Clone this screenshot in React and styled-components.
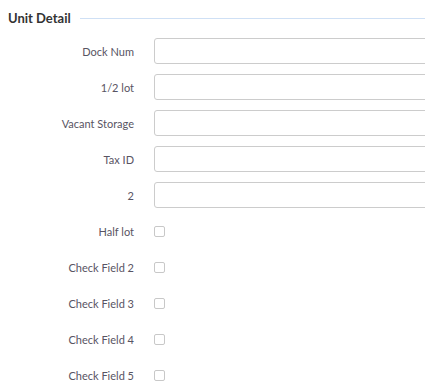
import React from 'react';
import styled, { createGlobalStyle } from "styled-components"

const GlobalStyle = createGlobalStyle`
    body {
        margin: 0;
        padding: 8px 0 8px 8px;
        font-family: Lato, "Open Sans", sans-serif;
        background: #fff;
        overflow: hidden;
    }
`

const textFields = ["Dock Num", "1/2 lot", "Vacant Storage", "Tax ID", "2"];
const checkFields = ["Half lot", "Check Field 2", "Check Field 3", "Check Field 4", "Check Field 5"];

const App = () => {
    return (
        <>
            <GlobalStyle/>
            <Section>
                <Header>
                    <Title>Unit Detail</Title>
                    <Rule/>
                </Header>
                <Rows>
                    {textFields.map(label =>
                        <Row key={label}>
                            <Label>{label}</Label>
                            <TextInput type="text"/>
                        </Row>
                    )}
                    {checkFields.map(label =>
                        <Row key={label}>
                            <Label>{label}</Label>
                            <Check type="checkbox"/>
                        </Row>
                    )}
                </Rows>
            </Section>
        </>
    )
}
export default App;

//inputs run past the right edge, so the section clips them
const Section = styled.div`
    overflow: hidden;
`

const Header = styled.div`
    display: flex;
    align-items: center;
    height: 20px;
    margin-bottom: 10px;
`

const Title = styled.h2`
    margin: 0;
    font-size: 13px;
    font-weight: 700;
    color: #333;
`

//the light blue line after the title
const Rule = styled.div`
    flex: 1;
    margin-left: 9px;
    border-top: 1px solid #cfe0f5;
`

const Rows = styled.div`
    display: flex;
    flex-direction: column;
    gap: 10px;
`

const Row = styled.div`
    display: grid;
    grid-template-columns: 126px 1fr;
    column-gap: 20px;
    align-items: center;
    height: 26px;
`

const Label = styled.label`
    text-align: right;
    font-size: 11px;
    color: #585463;
`

const TextInput = styled.input`
    box-sizing: border-box;
    height: 26px;
    width: 320px;
    border: 1px solid #cccccc;
    border-radius: 3px;
    background: #fff;
    margin: 0;
`

const Check = styled.input`
    appearance: none;
    box-sizing: border-box;
    width: 11px;
    height: 11px;
    margin: 0;
    border: 1px solid #c8c8c8;
    border-radius: 2px;
    background: #fff;
`
